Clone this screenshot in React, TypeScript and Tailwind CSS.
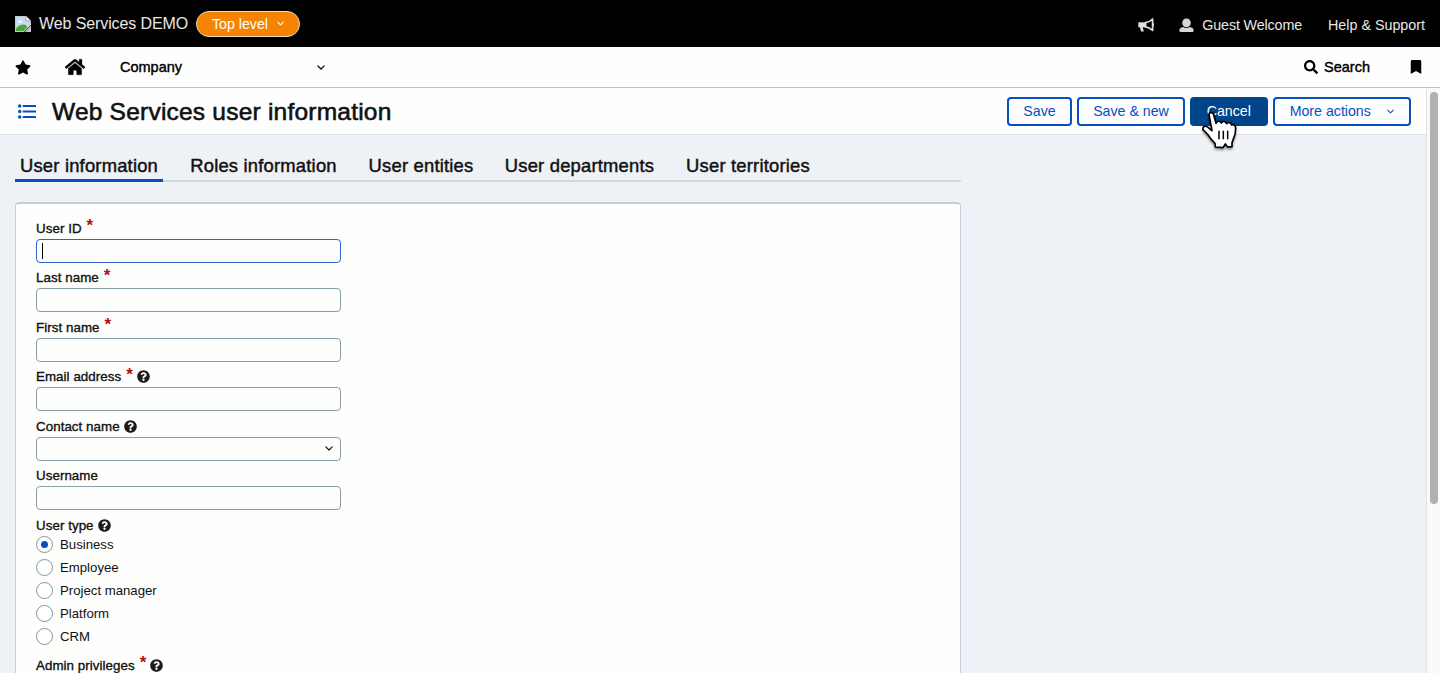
import React from "react";
import { FaStar, FaHome, FaSearch, FaBookmark, FaQuestionCircle } from "react-icons/fa";

function Chevron({ className }: { className: string }) {
  return (
    <svg viewBox="0 0 8 5" className={className} fill="none" stroke="currentColor" strokeWidth="1.2" strokeLinecap="round" strokeLinejoin="round">
      <path d="M0.8 0.8L4 4L7.2 0.8" />
    </svg>
  );
}

function BrokenImage() {
  return (
    <svg viewBox="0 0 16 16" className="h-4 w-4 shrink-0">
      <path d="M0 0H11L16 5V9L9 16H0Z" fill="#c4c6c9" />
      <path d="M1 1H10.5V5.5H15V8.6L8.6 15H1Z" fill="#c5dcf6" />
      <path d="M2.5 6.5C2.5 5 4 4.6 4.6 5.2C5 4 7 4.2 7 6.5Z" fill="#fff" />
      <path d="M1 15V12.5C4 9 8 7.5 11.5 9.5L12 11.6L8.6 15Z" fill="#4aa337" />
      <path d="M11 0V5H16Z" fill="#f4f4f4" stroke="#9a9c9f" strokeWidth="0.7" />
      <path d="M16 9.6V16H9.8Z" fill="#c4c6c9" />
    </svg>
  );
}

function UserIcon() {
  return (
    <svg viewBox="0 0 15 15" className="h-[15px] w-[15px]" fill="#d6d6d6">
      <ellipse cx="7.5" cy="4.8" rx="4.3" ry="4.4" />
      <path d="M0.4 12.2C0.4 10.2 2 9.4 4.2 8.9C5.2 9.7 6.4 10 7.5 10C8.6 10 9.8 9.7 10.8 8.9C13 9.4 14.6 10.2 14.6 12.2V12.8Q14.6 14 13.4 14H1.6Q0.4 14 0.4 12.8Z" />
    </svg>
  );
}

function BullhornIcon() {
  return (
    <svg viewBox="0 0 16 14" className="mb-px h-[14px] w-4" fill="#e0e0e0">
      <path d="M0.3 4.3H8V9.3H0.3Z" />
      <path d="M1.8 8.5H4.5L5.8 13.4H3Z" />
      <path d="M7.6 4.7C10.4 4.4 12.4 3.2 14.6 1V12.4C12.4 10.4 10.4 9.2 7.6 8.9Z" fill="none" stroke="#e0e0e0" strokeWidth="1.7" strokeLinejoin="round" />
      <path d="M14.6 5H15.2Q16 5 16 6.6Q16 8.2 15.2 8.2H14.6Z" />
    </svg>
  );
}

function ListIcon() {
  return (
    <svg viewBox="0 0 18 15" className="h-[15px] w-[18px]" fill="#0550bd">
      <circle cx="1.7" cy="2" r="1.7" />
      <circle cx="1.7" cy="7.5" r="1.7" />
      <circle cx="1.7" cy="13" r="1.7" />
      <rect x="4.7" y="0.9" width="13.3" height="2.2" rx="0.4" />
      <rect x="4.7" y="6.4" width="13.3" height="2.2" rx="0.4" />
      <rect x="4.7" y="11.9" width="13.3" height="2.2" rx="0.4" />
    </svg>
  );
}

function Pointer() {
  return (
    <svg viewBox="30 30 114 120" className="absolute left-[10px] top-[13px] z-10 h-10 w-[38px] drop-shadow-[0_2px_1px_rgba(0,0,0,0.4)]">
      <path
        d="M57 44C58 35 68 35 71 44L78 70C82 62 91 62 94 69C98 62 107 63 110 71C115 65 123 67 125 75C131 72 137 76 137 85C137 100 135 108 130 117L126 128V140L113 141L106 132L99 143L76 141L75 130C66 122 60 114 52 102L40 90C36 83 43 75 51 80C56 83 61 88 66 92Z"
        fill="#fff"
        stroke="#000"
        strokeWidth="5"
        strokeLinejoin="round"
      />
      <path d="M87 92V118M100 92V118M113 92V118" stroke="#000" strokeWidth="4.5" />
    </svg>
  );
}

function Label({ text, required, help }: { text: string; required?: boolean; help?: boolean }) {
  return (
    <div className="flex h-[21px] items-center text-[13.33px] tracking-[0.06px] text-[#111] [-webkit-text-stroke:0.35px_#111]">
      <span className="pt-px">{text}</span>
      {required && <span className="-mt-[5px] ml-[5px] h-[21px] text-[17px] leading-[21px] font-bold text-[#b00d0d] [-webkit-text-stroke:0]">*</span>}
      {help && <FaQuestionCircle className="ml-1 h-[13px] w-[13px] text-[#1c1c1c]" />}
    </div>
  );
}

function Field({ select, focused, ...label }: { text: string; required?: boolean; help?: boolean; select?: boolean; focused?: boolean }) {
  return (
    <div className="h-[49.5px]">
      <Label {...label} />
      <div className={`flex h-6 w-[305px] items-center rounded-[4px] border-[1.5px] bg-[#fefefc] px-[5px] ${focused ? "border-[#2f62cd]" : "border-[#8b9fa9]"}`}>
        {focused && <span className="h-4 w-px bg-black" />}
        {select && <Chevron className="mr-[2px] ml-auto h-[5px] w-2 text-[#111]" />}
      </div>
    </div>
  );
}

const tabs = [
  { text: "User information", cls: "w-[148px] border-b-[#0550bd]" },
  { text: "Roles information", cls: "w-[157px] border-b-transparent" },
  { text: "User entities", cls: "w-[114px] border-b-transparent" },
  { text: "User departments", cls: "w-[159px] border-b-transparent" },
  { text: "User territories", cls: "w-[134px] border-b-transparent" },
];

const types = ["Business", "Employee", "Project manager", "Platform", "CRM"];

const button = "flex h-[29px] items-center justify-center rounded-[4px] border-2 pt-[2px] text-[14.2px]";

export default function App() {
  return (
    <div className="flex h-[673px] w-[1440px] flex-col overflow-hidden bg-[#eef1f5] font-['Liberation_Sans',Arial,sans-serif] text-[#111]">
      <header className="flex h-[47px] shrink-0 items-center bg-black pr-[15px] pl-[15px] text-[#e8e8e8]">
        <BrokenImage />
        <span className="ml-2 w-[157px] text-[16px] tracking-[-0.1px] whitespace-nowrap">Web Services DEMO</span>
        <div className="flex h-[26px] w-[104px] items-center rounded-full border border-[#f6d7b0] bg-[#f48402] pt-[2px] pl-[15px] text-[14.2px] text-white">
          <span className="w-[56px]">Top level</span>
          <Chevron className="mb-[2px] ml-[9px] h-[5px] w-[7px]" />
        </div>
        <div className="ml-auto flex items-center pt-1 text-[14.3px]">
          <BullhornIcon />
          <span className="ml-[25px]"><UserIcon /></span>
          <span className="ml-2 tracking-[-0.13px]">Guest Welcome</span>
          <span className="ml-[26px]">Help &amp; Support</span>
        </div>
      </header>

      <nav className="flex h-[41px] shrink-0 items-center border-b border-[#b4c1ce] bg-[#fefefe] pr-[18px] pl-[15px] text-[14.5px] text-black">
        <FaStar className="h-[15px] w-4" />
        <FaHome className="ml-[34px] h-5 w-5 [stroke:black] [stroke-width:10]" />
        <span className="ml-[35px] w-[197px] pt-[2px] [-webkit-text-stroke:0.4px]">Company</span>
        <Chevron className="h-[5px] w-2" />
        <FaSearch className="ml-auto h-[14px] w-[14px]" />
        <span className="ml-[6px] pt-[2px] [-webkit-text-stroke:0.4px]">Search</span>
        <FaBookmark className="ml-[40px] h-[14px] w-[12px]" />
      </nav>

      <div className="flex min-h-0 flex-1">
        <main className="flex min-w-0 flex-1 flex-col">
          <div className="flex h-[47px] shrink-0 items-center border-b border-[#dcdfe3] bg-[#fefefe] pr-[15px] pl-[18px]">
            <ListIcon />
            <h1 className="ml-4 pt-[2px] text-[24.5px] tracking-[0.22px] [-webkit-text-stroke:0.6px]">Web Services user information</h1>
            <div className="ml-auto flex gap-[5px] text-[#0550bd]">
              <button className={`${button} w-[65px] border-[#0550bd]`}>Save</button>
              <button className={`${button} w-[108px] border-[#0550bd]`}>Save &amp; new</button>
              <div className="relative">
                <button className={`${button} w-[77.5px] border-[#00458a] bg-[#00458a] text-white`}>Cancel</button>
                <Pointer />
              </div>
              <button className={`${button} w-[138.5px] border-[#0550bd]`}>
                More actions
                <Chevron className="mb-[2px] ml-4 h-[5px] w-[7px]" />
              </button>
            </div>
          </div>

          <div className="ml-[15px] flex h-[47px] w-[946px] shrink-0 items-end gap-[22px] border-b-2 border-[#d0d7de] pt-[17px]">
            {tabs.map((t) => (
              <div key={t.text} className={`-mb-[2px] flex h-[30px] justify-center border-b-[3px] text-[18.4px] leading-[27px] tracking-[0.2px] whitespace-nowrap [-webkit-text-stroke:0.45px] ${t.cls}`}>
                {t.text}
              </div>
            ))}
          </div>

          <section className="mt-5 ml-[15px] min-h-0 w-[946px] flex-1 overflow-hidden rounded-t-[4px] border-x border-t-2 border-[#c3ced6] bg-[#fefefc] pt-[13.5px] pl-5">
            <Field text="User ID" required focused />
            <Field text="Last name" required />
            <Field text="First name" required />
            <Field text="Email address" required help />
            <Field text="Contact name" help select />
            <Field text="Username" />
            <Label text="User type" help />
            <div className="-mt-[3px]">
              {types.map((t, i) => (
                <div key={t} className="flex h-[23px] items-center text-[13.2px]">
                  <span className="mr-[7px] flex h-[17px] w-[17px] items-center justify-center rounded-full border border-[#8395a0] bg-white">
                    {i === 0 && <span className="h-[7px] w-[7px] rounded-full bg-[#0550bd]" />}
                  </span>
                  <span className="pt-px">{t}</span>
                </div>
              ))}
            </div>
            <div className="mt-[7px]">
              <Label text="Admin privileges" required help />
            </div>
          </section>
        </main>
        <aside className="w-[14px] shrink-0 border-l border-[#e0e2e4] bg-[#fafafa] pt-1 pl-[3px]">
          <div className="h-[412px] w-2 rounded-full bg-[#b1b1b3]" />
        </aside>
      </div>
    </div>
  );
}
